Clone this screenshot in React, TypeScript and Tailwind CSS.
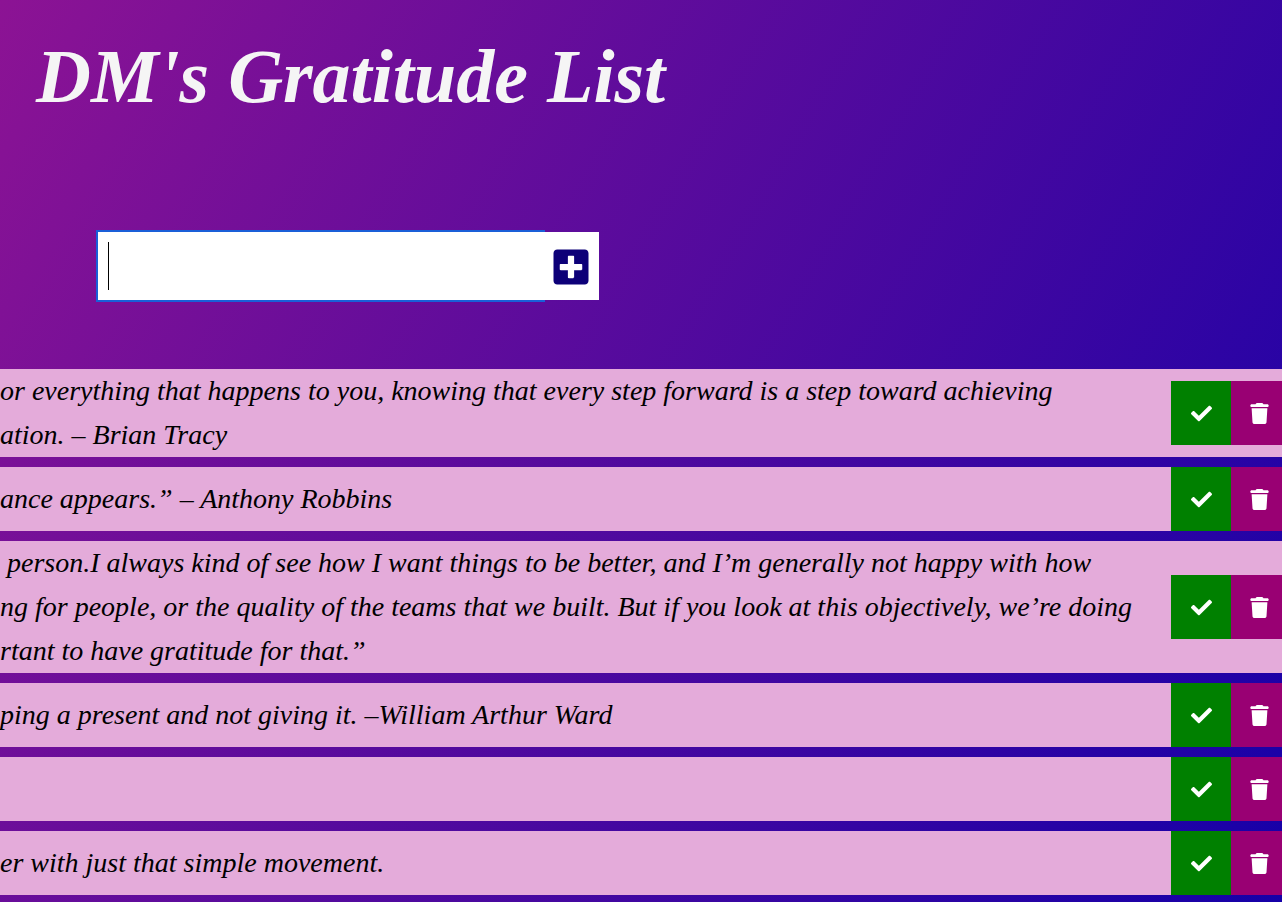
import { FaCheck, FaPlusSquare } from 'react-icons/fa';
import { FaTrash } from 'react-icons/fa6';

const entries: string[][] = [
  [
    'or everything that happens to you, knowing that every step forward is a step toward achieving',
    'ation. – Brian Tracy',
  ],
  ['ance appears.” – Anthony Robbins'],
  [
    ' person.I always kind of see how I want things to be better, and I’m generally not happy with how',
    'ng for people, or the quality of the teams that we built. But if you look at this objectively, we’re doing',
    'rtant to have gratitude for that.”',
  ],
  ['ping a present and not giving it. –William Arthur Ward'],
  [''],
  ['er with just that simple movement.'],
];

function Entry({ lines }: { lines: string[] }) {
  return (
    <li className="-mr-[5px] flex min-h-16 items-center bg-[#e4abda]">
      <p className="min-w-0 flex-1 whitespace-pre text-[28px] leading-[44px] text-black">
        {lines.join('\n')}
      </p>
      <button
        type="button"
        aria-label="Mark as done"
        className="flex h-16 w-[60px] shrink-0 items-center justify-center bg-[#008000] text-white"
      >
        <FaCheck size={21} />
      </button>
      <button
        type="button"
        aria-label="Delete"
        className="flex h-16 w-14 shrink-0 items-center justify-center bg-[#990073] text-white"
      >
        <FaTrash size={21} />
      </button>
    </li>
  );
}

export default function App() {
  return (
    <div className="min-h-screen overflow-hidden bg-[linear-gradient(120deg,#8c1394,#1500a8)] font-['Liberation_Serif',serif] italic">
      <header className="px-9 pt-5">
        <h1 className="text-[76px] font-bold leading-[112px] text-[#f5f5f5]">DM's Gratitude List</h1>
      </header>
      <form className="mt-[100px] ml-[98px] flex h-[68px]" onSubmit={(e) => e.preventDefault()}>
        <div className="relative flex w-[445px]">
          <input
            autoFocus
            type="text"
            aria-label="New entry"
            className="peer w-full bg-white px-2.5 text-[42px] leading-[48px] text-black caret-transparent outline-2 outline-[#1a5fd8]"
          />
          <span className="pointer-events-none absolute top-2.5 left-2.5 hidden h-12 w-px bg-black peer-focus:peer-placeholder-shown:block peer-focus:block" />
        </div>
        <button
          type="submit"
          aria-label="Add entry"
          className="relative flex w-14 items-center justify-center bg-white pt-0.5 text-[#0d0078]"
        >
          <FaPlusSquare size={40} />
        </button>
      </form>
      <ul className="mt-[69px] flex flex-col gap-2.5 pb-[7px]">
        {entries.map((lines, i) => (
          <Entry key={i} lines={lines} />
        ))}
      </ul>
    </div>
  );
}
